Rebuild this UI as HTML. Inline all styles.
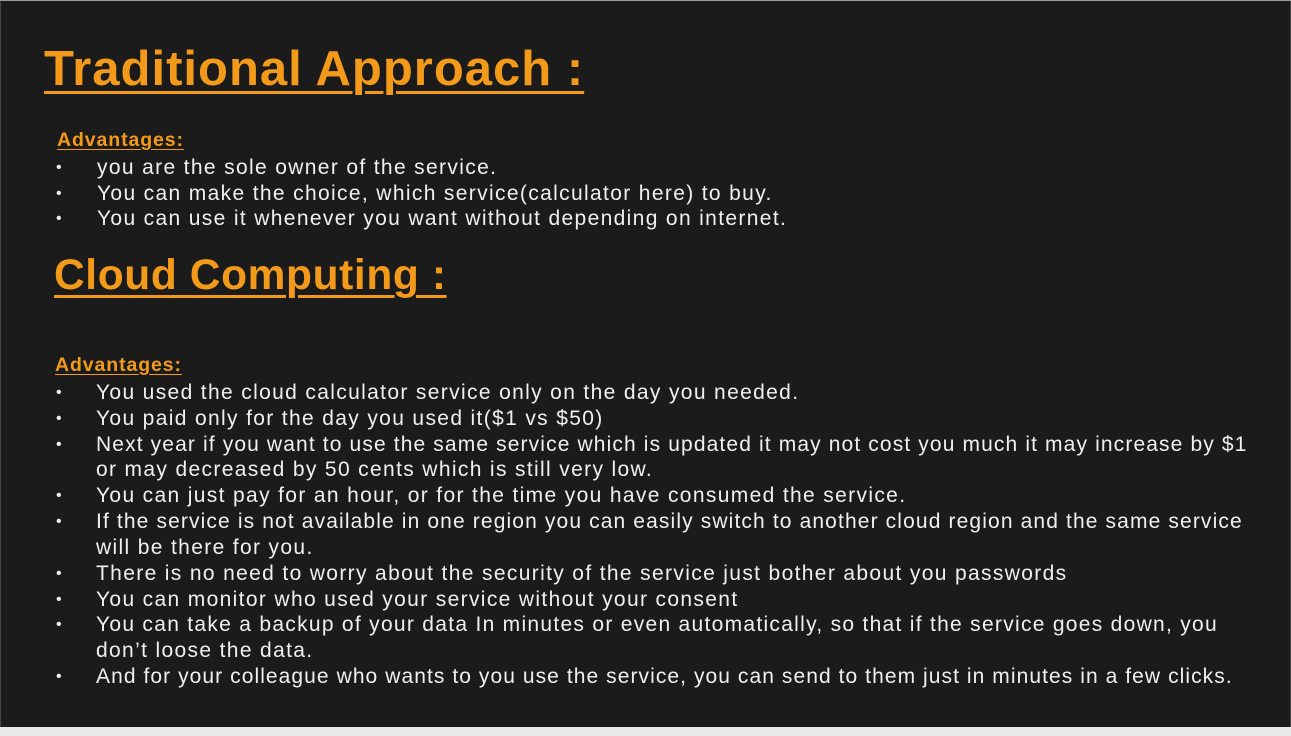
<!DOCTYPE html>
<html><head><style>
body{margin:0;width:1291px;height:736px;background:#e8e8e8;overflow:hidden;font-family:"Liberation Sans",sans-serif;}
#s{position:absolute;left:0;top:1px;width:1289px;height:726px;background:#1b1b1b;border-left:1px solid #444;border-right:1px solid #444;}
#t{position:absolute;left:0;top:0;width:1291px;height:1px;background:#9a9a9a}
.l{position:absolute;white-space:nowrap;color:#f0f0f0;font-size:21px;letter-spacing:1.35px;line-height:24px;}
.b{position:absolute;left:55px;color:#f0f0f0;font-size:16px;line-height:24px}
.h{position:absolute;white-space:nowrap;color:#f39a1b;font-weight:bold;line-height:1;text-decoration:underline;text-decoration-thickness:3px;text-underline-offset:6px;}
.a{position:absolute;white-space:nowrap;color:#f39a1b;font-weight:bold;font-size:19.5px;text-decoration:underline;text-underline-offset:3px;letter-spacing:0.9px}
</style></head><body>
<div id="t"></div>
<div id="s">
<div class="h" style="left:43px;top:44px;font-size:49px;letter-spacing:1px">Traditional Approach :</div>
<div class="a" style="left:56px;top:128px">Advantages:</div>
<div class="b" style="top:155px">•</div><div class="l" style="left:96px;top:155px">you are the sole owner of the service.</div>
<div class="b" style="top:181px">•</div><div class="l" style="left:96px;top:181px">You can make the choice, which service(calculator here) to buy.</div>
<div class="b" style="top:206px">•</div><div class="l" style="left:96px;top:206px">You can use it whenever you want without depending on internet.</div>
<div class="h" style="left:53px;top:254px;font-size:42.5px;letter-spacing:0.6px">Cloud Computing :</div>
<div class="a" style="left:54px;top:353px">Advantages:</div>
<div class="b" style="top:380px">•</div><div class="l" style="left:95px;top:380px">You used the cloud calculator service only on the day you needed.</div>
<div class="b" style="top:406px">•</div><div class="l" style="left:95px;top:406px">You paid only for the day you used it($1 vs $50)</div>
<div class="b" style="top:432px">•</div><div class="l" style="left:95px;top:432px;letter-spacing:1.13px">Next year if you want to use the same service which is updated it may not cost you much it may increase by $1</div>
<div class="l" style="left:95px;top:457px">or may decreased by 50 cents which is still very low.</div>
<div class="b" style="top:483px">•</div><div class="l" style="left:95px;top:483px">You can just pay for an hour, or for the time you have consumed the service.</div>
<div class="b" style="top:509px">•</div><div class="l" style="left:95px;top:509px;letter-spacing:1.13px">If the service is not available in one region you can easily switch to another cloud region and the same service</div>
<div class="l" style="left:95px;top:535px">will be there for you.</div>
<div class="b" style="top:561px">•</div><div class="l" style="left:95px;top:561px">There is no need to worry about the security of the service just bother about you passwords</div>
<div class="b" style="top:587px">•</div><div class="l" style="left:95px;top:587px">You can monitor who used your service without your consent</div>
<div class="b" style="top:612px">•</div><div class="l" style="left:95px;top:612px;letter-spacing:1.29px">You can take a backup of your data In minutes or even automatically, so that if the service goes down, you</div>
<div class="l" style="left:95px;top:638px">don’t loose the data.</div>
<div class="b" style="top:664px">•</div><div class="l" style="left:95px;top:664px;letter-spacing:1.07px">And for your colleague who wants to you use the service, you can send to them just in minutes in a few clicks.</div>
</div>
</body></html>
